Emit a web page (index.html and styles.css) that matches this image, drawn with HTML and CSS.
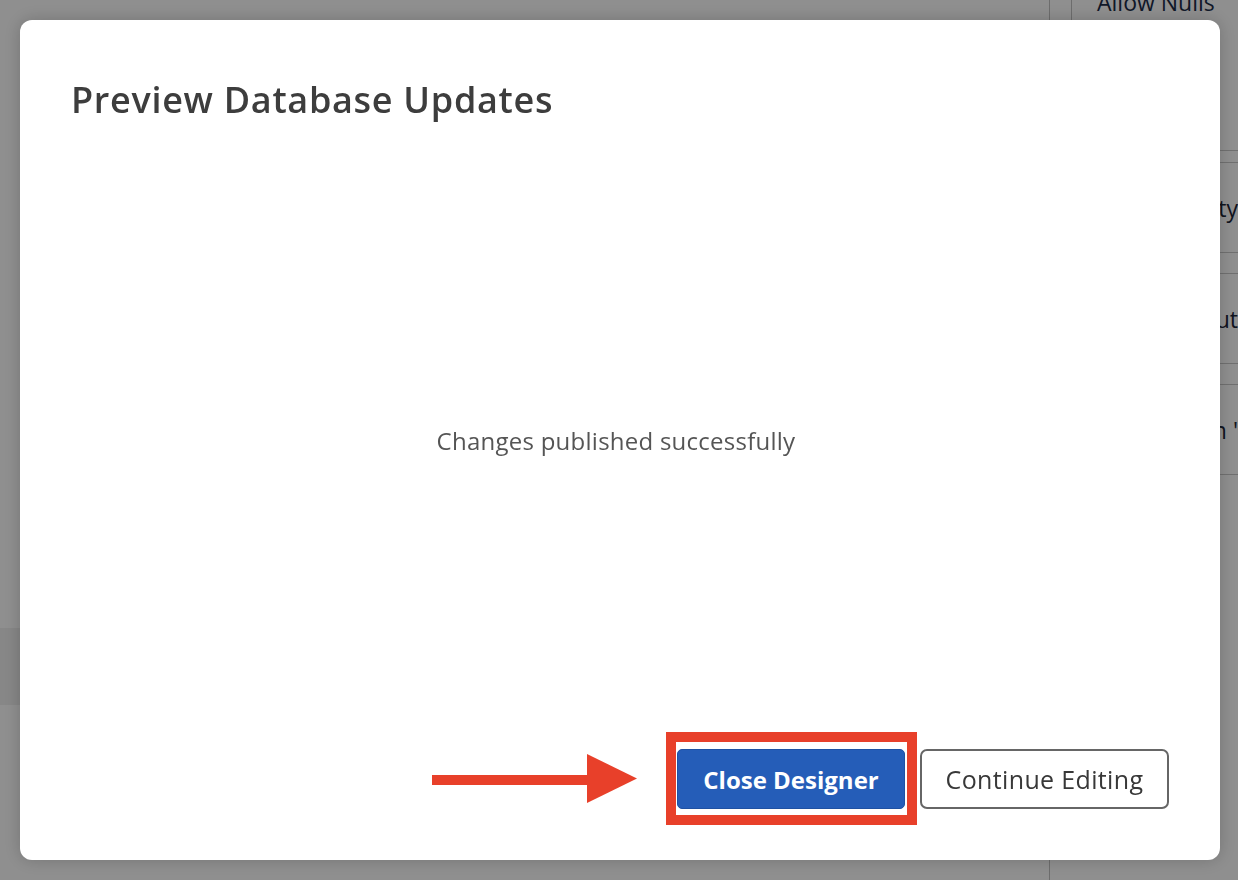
FILE: index.html
```html
<!DOCTYPE html>
<html lang="en">
<head>
<meta charset="utf-8">
<title>Preview Database Updates</title>
<link rel="stylesheet" href="styles.css">
</head>
<body>
<div class="page">
  <div class="main">
    <div class="main-top"></div>
    <div class="status-band"></div>
    <div class="main-bottom"></div>
  </div>
  <aside class="side">
    <div class="side-head">
      <div class="gutter"></div>
      <div class="head-label">Allow Nulls</div>
    </div>
    <div class="props">
      <div class="prop"><span>Is Identity</span></div>
      <div class="prop"><span>Output</span></div>
      <div class="prop"><span>Column '</span></div>
    </div>
  </aside>
</div>

<div class="overlay">
  <div class="modal" role="dialog" aria-labelledby="dlg-title">
    <header class="modal-header">
      <h1 id="dlg-title" class="modal-title">Preview Database Updates</h1>
    </header>
    <div class="modal-body">
      <p class="status-msg">Changes published successfully</p>
    </div>
    <footer class="modal-footer">
      <div class="highlight">
        <svg class="callout-arrow" viewBox="0 0 205 49" width="205" height="49" aria-hidden="true">
          <rect x="0" y="21" width="158" height="10" fill="#e8402a"/>
          <polygon points="155,0 205,24.5 155,49" fill="#e8402a"/>
        </svg>
        <button class="btn btn-primary" type="button">Close Designer</button>
      </div>
      <button class="btn btn-secondary" type="button">Continue Editing</button>
    </footer>
  </div>
</div>
</body>
</html>
```

FILE: styles.css
```css
* { box-sizing: border-box; }

html, body {
  margin: 0;
  height: 100%;
}

body {
  font-family: "Open Sans", "Noto Sans", "Liberation Sans", sans-serif;
  background: #ffffff;
  overflow: hidden;
}

/* ---------- underlying designer page ---------- */
.page {
  display: flex;
  height: 880px;
}

.main {
  flex: 1;
  display: flex;
  flex-direction: column;
}

.main-top { height: 628px; }

.status-band {
  height: 77px;
  background: #f0f0f0;
}

.main-bottom { flex: 1; }

.side {
  width: 189px;
  border-left: 1px solid #c2c2c2;
  display: flex;
  flex-direction: column;
}

.side-head {
  display: flex;
  height: 43px;
  margin-top: -13px;
}

.gutter {
  width: 22px;
  border-right: 1px solid #c2c2c2;
}

.head-label {
  padding-left: 25px;
  font-size: 23px;
  line-height: 30px;
  color: #1c2c48;
  white-space: nowrap;
}

.props {
  padding-top: 120px;
  display: flex;
  flex-direction: column;
  gap: 20px;
}

.props::before {
  content: "";
  display: block;
  border-bottom: 1px solid #c8c8c8;
  margin-bottom: -9px;
}

.prop {
  height: 91px;
  border-top: 1px solid #c8c8c8;
  border-bottom: 1px solid #c8c8c8;
  display: flex;
  align-items: center;
  justify-content: flex-end;
  font-size: 23px;
  color: #1c2436;
  white-space: nowrap;
}

/* ---------- modal ---------- */
.overlay {
  position: fixed;
  inset: 0;
  background: rgba(0, 0, 0, 0.44);
  display: flex;
  align-items: center;
  padding-left: 20px;
}

.modal {
  width: 1200px;
  height: 840px;
  background: #ffffff;
  border-radius: 12px;
  box-shadow: 0 0 18px rgba(0, 0, 0, 0.2);
  display: grid;
  grid-template-rows: 130px 1fr 130px;
}

.modal-header {
  padding: 58px 51px 0;
}

.modal-title {
  margin: 0;
  font-size: 36px;
  line-height: 44px;
  font-weight: 600;
  color: #3d3d3d;
  letter-spacing: 0.7px;
}

.modal-body {
  display: flex;
  align-items: center;
  justify-content: center;
  padding-right: 8px;
}

.status-msg {
  margin: 0;
  font-size: 24px;
  letter-spacing: 0.25px;
  color: #555555;
}

.modal-footer {
  display: flex;
  justify-content: flex-end;
  align-items: flex-start;
  gap: 15px;
  padding: 19px 51px 0;
}

.highlight {
  position: relative;
}

.highlight::after {
  content: "";
  position: absolute;
  top: -17px;
  left: -11px;
  right: -12px;
  bottom: -16px;
  border: 10px solid #e8402a;
  pointer-events: none;
}

.callout-arrow {
  position: absolute;
  right: calc(100% + 40px);
  top: 5px;
  display: block;
}

.btn {
  height: 60px;
  font-family: inherit;
  cursor: pointer;
}

.btn-primary {
  width: 228px;
  background: #255db8;
  border: 1px solid #1f51a3;
  border-radius: 5px;
  color: #ffffff;
  font-size: 24px;
  font-weight: 700;
}

.btn-secondary {
  width: 249px;
  background: #ffffff;
  border: 2px solid #666666;
  border-radius: 7px;
  color: #383838;
  font-size: 25px;
  letter-spacing: 0.35px;
  font-weight: 400;
}
```
